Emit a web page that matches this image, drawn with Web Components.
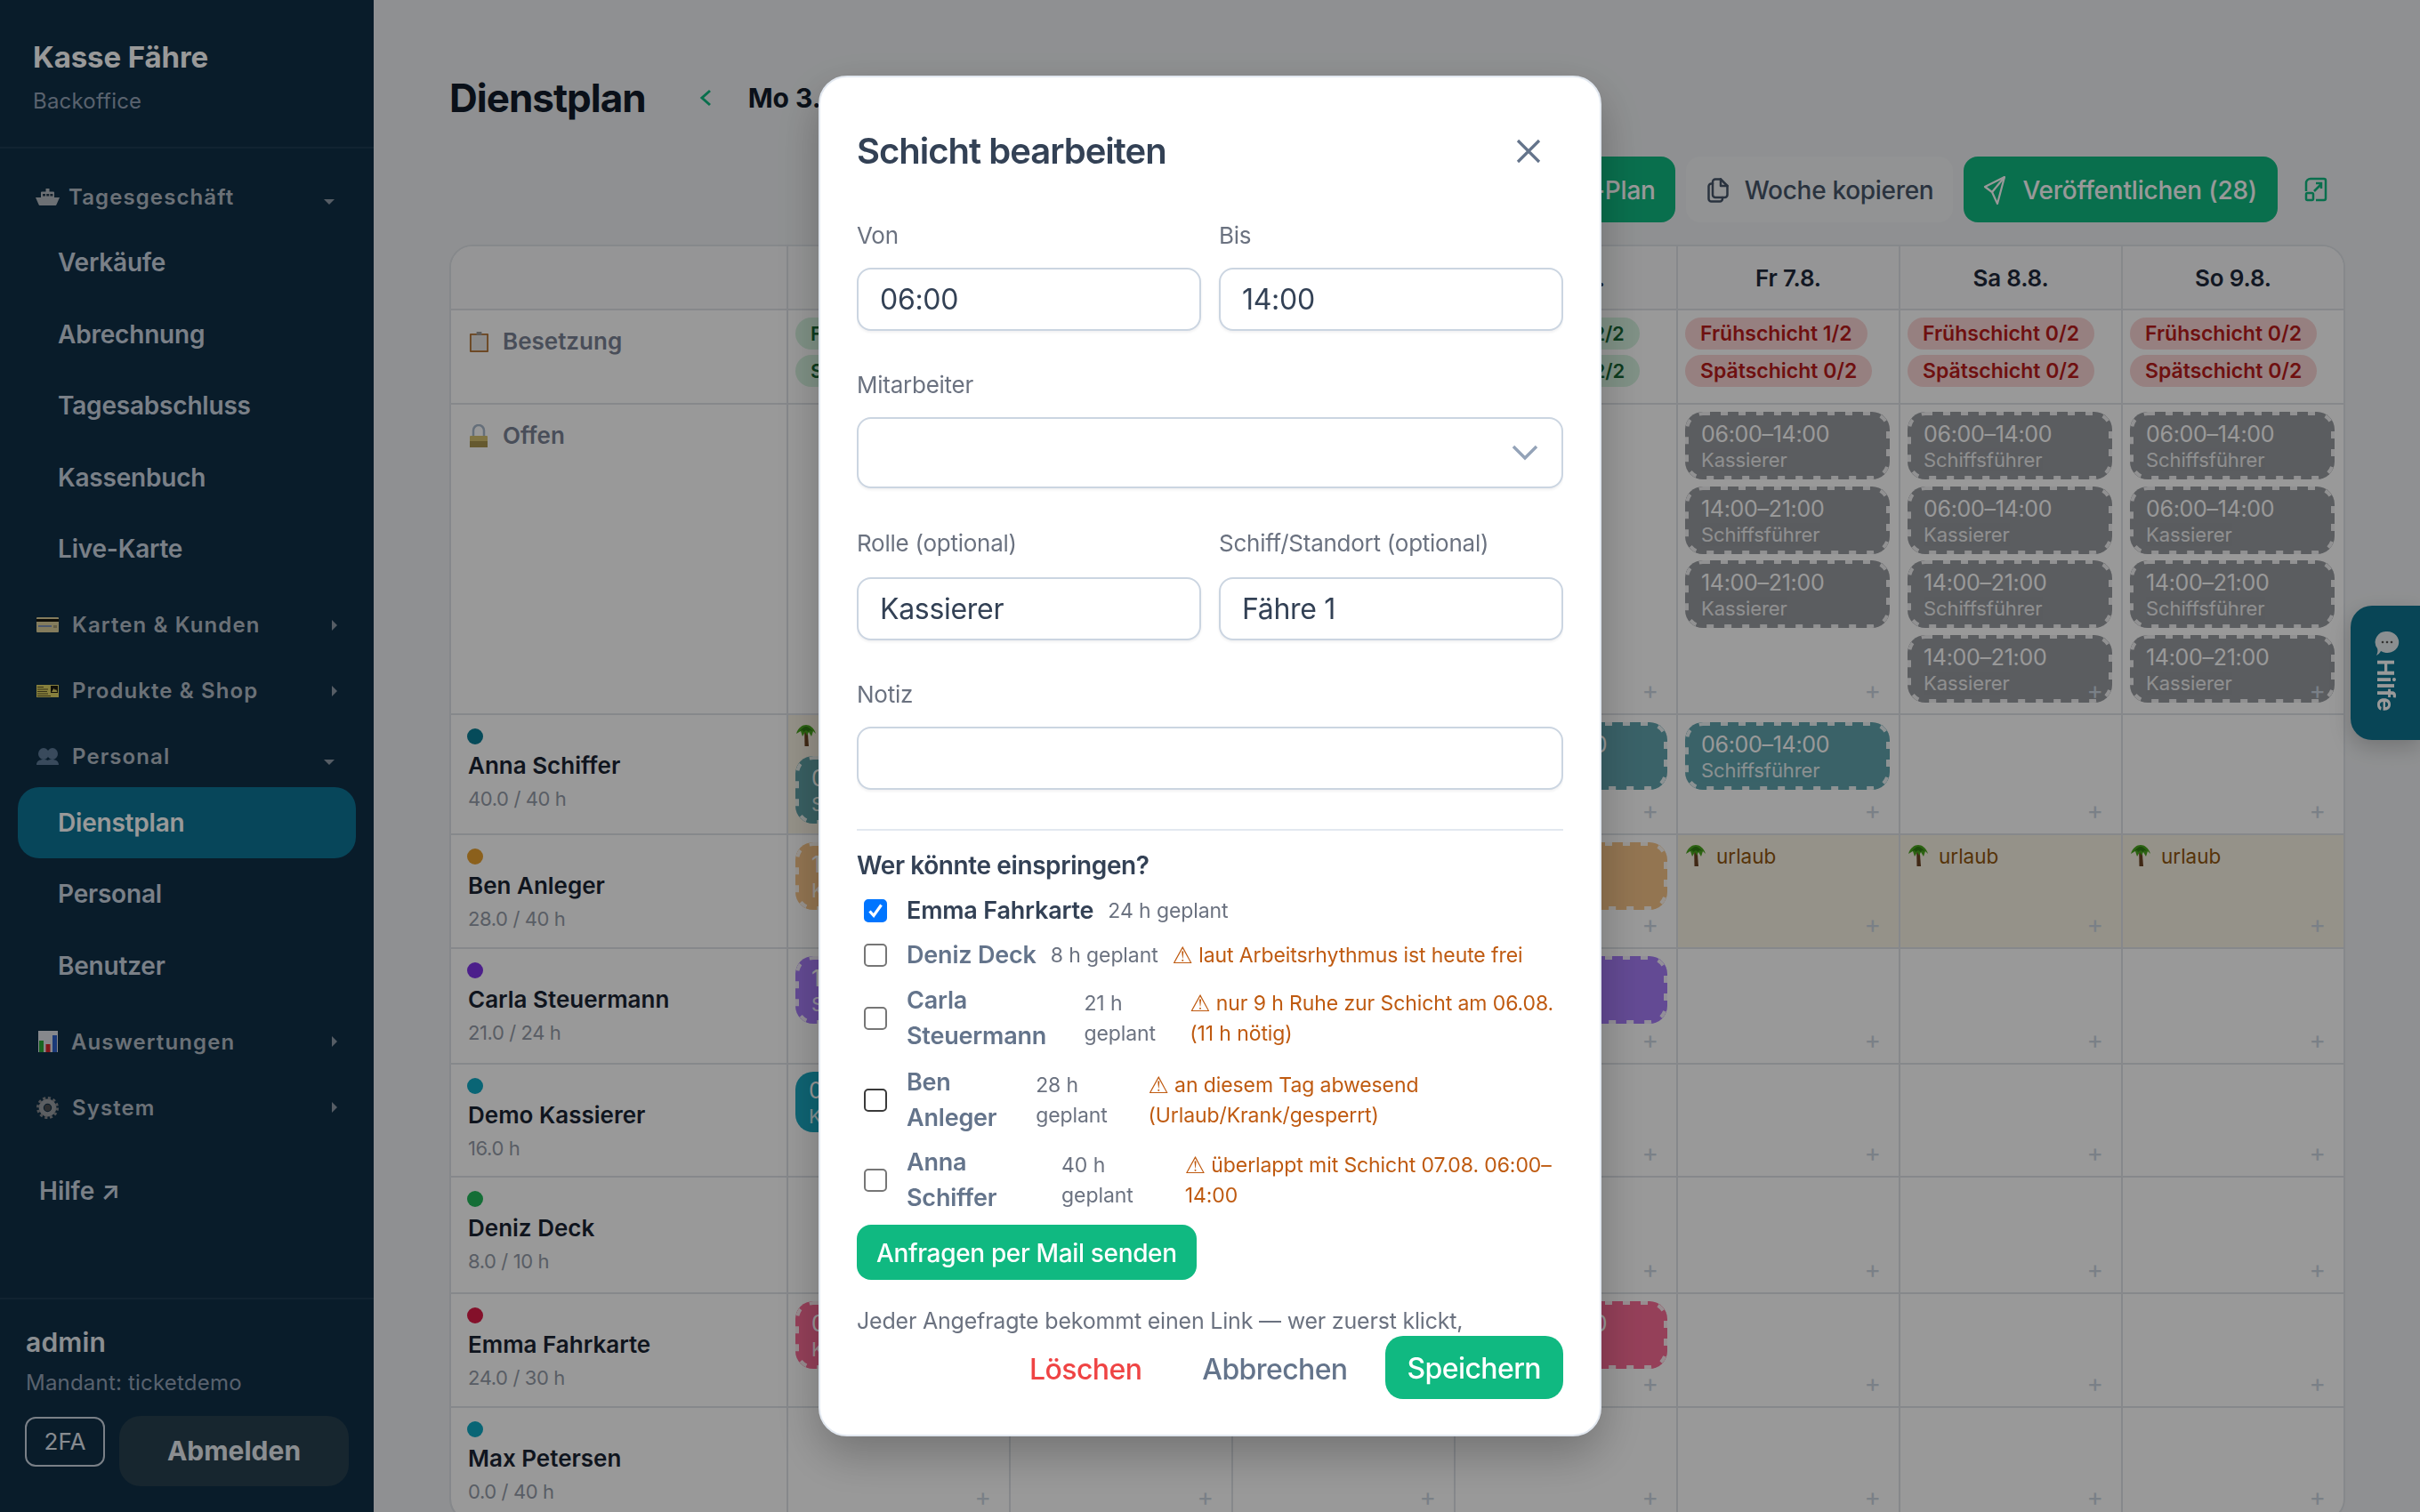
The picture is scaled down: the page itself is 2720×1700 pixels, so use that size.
<!DOCTYPE html>
<html lang="de"><head><meta charset="utf-8"><title>Dienstplan</title>
<style>
html,body{margin:0;padding:0;height:100%;overflow:hidden;background:#eff1f3;font-family:Inter,"Liberation Sans",sans-serif}
</style></head><body>
<x-app>
  <x-sidebar slot="side"></x-sidebar>
  <x-page>
    <x-topbar></x-topbar>
    <x-roster></x-roster>
  </x-page>
</x-app>
<x-helptab></x-helptab>
<x-dialog heading="Schicht bearbeiten">
  <x-row2>
    <x-field label="Von"><x-box>06:00</x-box></x-field>
    <x-field label="Bis"><x-box>14:00</x-box></x-field>
  </x-row2>
  <x-field label="Mitarbeiter"><x-box select></x-box></x-field>
  <x-row2 style="--mt:44px;--lg:20px">
    <x-field label="Rolle (optional)"><x-box>Kassierer</x-box></x-field>
    <x-field label="Schiff/Standort (optional)"><x-box>Fähre 1</x-box></x-field>
  </x-row2>
  <x-field label="Notiz"><x-box></x-box></x-field>
  <x-standby></x-standby>
</x-dialog>
<script>
const define=(name,css,render)=>customElements.define(name,class extends HTMLElement{
  connectedCallback(){ if(this.shadowRoot)return; const r=this.attachShadow({mode:'open'}); r.innerHTML=`<style>${css}</style>`+(typeof render==='function'?render(this):render); }
});
const EMOJI={
 ship:`<svg viewBox="0 0 27 19" width="27" height="19"><path fill="#b4bbc2" d="M11.500 0h4v4h-4zM6 4.500a1 1 0 0 1 1-1h13a1 1 0 0 1 1 1V10H6z"/><path fill="#b4bbc2" d="M0 10h27l-3.500 8a1.500 1.500 0 0 1-1.500 1H5a1.500 1.500 0 0 1-1.500-1z"/><path fill="#24394b" d="M8 6h3v2.500H8zM12.200 6h3v2.500h-3zM16.400 6h3v2.500h-3z"/></svg>`,
 card:`<svg viewBox="0 0 25 17" width="25" height="17"><rect width="25" height="17" rx="1" fill="#dccf9c"/><rect y="2" width="25" height="3" fill="#17140c"/><rect x="2" y="9" width="15" height="2" fill="#7f93b8"/><rect x="19" y="9" width="4" height="3" fill="#a89f78"/></svg>`,
 ticket:`<svg viewBox="0 0 25 14" width="25" height="14"><rect width="25" height="14" fill="#e2d566"/><path d="M1 2h7v1H1zM1 4.500h12v1H1zM1 7h11v1H1zM1 9.500h12v1H1zM1 12h15v1H1z" fill="#5c5628"/><rect x="16" y="1" width="8" height="8" fill="#1d1b10"/><path fill="#e2d566" d="M17 8l2.500-4 1.500 2 1-1 1.500 3z"/></svg>`,
 people:`<svg viewBox="0 0 25 19" width="25" height="19"><g fill="#5f7c9a"><ellipse cx="8" cy="6.500" rx="6" ry="6.500"/><ellipse cx="18" cy="6.500" rx="6" ry="6.500"/><path d="M0 19c0-4 3-6 8-6 2 0 3.500.3 4.500 1 1-.7 2.500-1 5-1 4.500 0 7.500 2 7.500 6z"/></g></svg>`,
 chart:`<svg viewBox="0 0 22 24" width="22" height="24"><rect width="22" height="24" fill="#dfe3ea"/><rect x="1" y="11" width="5" height="13" fill="#2aa838"/><rect x="8.500" y="15" width="5" height="9" fill="#d8262c"/><rect x="16" y="5" width="5" height="19" fill="#2c60c8"/></svg>`,
 gear:`<svg viewBox="0 0 24 24" width="25" height="25"><circle cx="12" cy="12" r="7" fill="none" stroke="#9a9ea3" stroke-width="5"/><circle cx="12" cy="12" r="10.500" fill="none" stroke="#84888d" stroke-width="3" stroke-dasharray="3 2.500"/><circle cx="12" cy="12" r="3.500" fill="#4a4d50"/></svg>`,
 clip:`<svg viewBox="0 0 24 26" width="23" height="25"><rect x="1" y="3" width="22" height="22" rx="1" fill="#b5773a"/><rect x="3" y="5" width="18" height="18" fill="#e8e8e8"/><rect x="9" y="1" width="6" height="4" fill="#9a9a9a"/></svg>`,
 lock:`<svg viewBox="0 0 20 26" width="20" height="26"><path d="M4 13V7a6 6 0 0 1 12 0v6" fill="none" stroke="#a9b9cc" stroke-width="2.500"/><rect y="13" width="20" height="13" rx="1" fill="#d6c171"/><rect y="19" width="20" height="7" fill="#a8954f"/></svg>`,
 palm:`<svg viewBox="0 0 22 24" width="22" height="24"><path d="M9.200 8h3.600l1.200 16H9.500z" fill="#6b4423"/><path d="M0 10C2 3 7 0 11 0s9 3 11 10l-3-3-2 6-3-5-2 4-2-4-3 5-2-6z" fill="#4aa51f"/><path d="M4 7c2-3 5-5 7-5s5 2 7 5l-3-1-1 2-3-2-3 2-1-2z" fill="#2f7d12"/></svg>`
};
define('x-emoji',':host{display:inline-flex;flex:none;align-items:center;justify-content:center}svg{display:block}',h=>EMOJI[h.getAttribute('name')]);

define('x-app',':host{display:flex;width:2720px;height:1700px;overflow:hidden}','<slot name="side"></slot><slot></slot>');

/* ---------- sidebar ---------- */
define('x-navgroup',`
:host{display:flex;align-items:center;height:70px;margin-bottom:4px;padding:0 42px 0 40px;color:#b3bcc6;font-size:24px;font-weight:600;letter-spacing:1.1px}
.i{width:27px;margin-right:var(--g,14px);display:flex;justify-content:center}
.t{flex:1;white-space:nowrap}
svg{display:block}`,h=>{
 const open=h.hasAttribute('open');
 return `<span class="i"><x-emoji name="${h.getAttribute('icon')}"></x-emoji></span><span class="t"><slot></slot></span>`+
 (open?`<svg width="12" height="6" viewBox="0 0 12 6" style="margin-top:12px;margin-right:2px"><path d="M0 0h12L6 6z" fill="#8f9ba8"/></svg>`
      :`<svg width="6" height="12" viewBox="0 0 6 12" style="margin-right:-1px"><path d="M0 0l6 6-6 6z" fill="#8f9ba8"/></svg>`);
});
define('x-navitem',`
:host{display:flex;align-items:center;height:80px;margin:0 20px .5px;padding-left:45px;border-radius:24px;color:#cbd5e1;font-size:28px;font-weight:600;letter-spacing:-.2px}
:host([active]){background:#0d7596;color:#fff}`,()=>'<slot></slot>');
define('x-sidebar',`
:host{display:flex;flex-direction:column;width:420px;flex:none;height:1700px;background:#0f2f47;color:#fff;box-sizing:border-box}
.brand{height:167px;box-sizing:border-box;border-bottom:2px solid #1d3b52;padding:42px 37px 0}
.brand b{display:block;font-size:33px;line-height:44px;font-weight:700;color:#fff;letter-spacing:-.1px}
.brand span{display:block;font-size:24px;line-height:32px;margin-top:12px;color:#94a3b8;letter-spacing:.2px}
nav{padding-top:19px;flex:1}
.items{margin-top:-5px}
.gap{height:10px}
.hilfe{display:flex;align-items:center;height:70px;margin-top:24px;padding-left:44px;font-size:28px;font-weight:600;color:#cbd5e1}
.foot{height:241px;box-sizing:border-box;border-top:2px solid #1d3b52;padding:29px 28px 0 29px}
.foot b{display:block;font-size:30px;line-height:38px;font-weight:600;color:#e8edf2;letter-spacing:.2px}
.foot .m{font-size:24px;line-height:36px;margin-top:9px;color:#94a3b8;letter-spacing:.2px}
.btns{display:flex;align-items:flex-start;gap:16px;margin-top:19px}
.fa{width:90px;height:56px;box-sizing:border-box;border:2px solid #cbd5e1;border-radius:12px;font-size:26px;line-height:52px;text-align:center;color:#e2e8f0;margin-top:1px;margin-left:-1px}
.out{width:258px;height:79px;border-radius:24px;background:#27404f;font-size:30px;font-weight:700;line-height:79px;text-align:center;color:#e8edf2}
`,()=>`
<div class="brand"><b>Kasse Fähre</b><span>Backoffice</span></div>
<nav>
<x-navgroup icon="ship" open style="--g:10px">Tagesgeschäft</x-navgroup>
<div class="items"><x-navitem>Verkäufe</x-navitem><x-navitem>Abrechnung</x-navitem><x-navitem>Tagesabschluss</x-navitem><x-navitem>Kassenbuch</x-navitem><x-navitem>Live-Karte</x-navitem></div>
<div class="gap"></div>
<x-navgroup icon="card">Karten &amp; Kunden</x-navgroup>
<x-navgroup icon="ticket">Produkte &amp; Shop</x-navgroup>
<x-navgroup icon="people" open>Personal</x-navgroup>
<div class="items"><x-navitem active>Dienstplan</x-navitem><x-navitem>Personal</x-navitem><x-navitem>Benutzer</x-navitem></div>
<div class="gap"></div>
<x-navgroup icon="chart" style="--g:13px">Auswertungen</x-navgroup>
<x-navgroup icon="gear">System</x-navgroup>
<div class="hilfe">Hilfe ↗</div>
</nav>
<div class="foot"><b>admin</b><div class="m">Mandant: ticketdemo</div>
<div class="btns"><div class="fa">2FA</div><div class="out">Abmelden</div></div></div>`);

/* ---------- page ---------- */
define('x-page',':host{display:block;flex:1;min-width:0;height:1700px;box-sizing:border-box;padding:80px 86px 0 85px;background:#eff1f3;overflow:hidden}','<slot></slot>');
define('x-btn',`
:host{display:inline-flex;align-items:center;gap:18px;height:74px;box-sizing:border-box;padding:2px 22px 0 24px;border-radius:16px;font-size:28px;font-weight:500;white-space:nowrap;background:#f3f5f7;color:#475569;letter-spacing:-.3px}
:host([primary]){background:#10b981;color:#fff;padding:2px 22px 0 22px;letter-spacing:-.2px}
::slotted(svg){display:block}`,()=>'<slot></slot>');
define('x-topbar',`
:host{display:block}
.r1{display:flex;align-items:center;height:60px}
h1{margin:0;font-size:44px;font-weight:700;color:#111c2a;line-height:60px;letter-spacing:-1px}
.nav{margin-left:60px;display:flex;align-items:center;gap:41px;font-size:30px;font-weight:700;color:#111c2a;white-space:nowrap}
.r2{display:flex;justify-content:flex-end;align-items:center;gap:12px;margin-top:36px;height:74px}
.ext{display:flex;align-items:center;justify-content:center;width:62px}
svg{display:block}
`,()=>`
<div class="r1"><h1>Dienstplan</h1><div class="nav"><svg width="14" height="20" viewBox="0 0 14 20"><path d="M12 2 3 10l9 8" fill="none" stroke="#10b981" stroke-width="3"/></svg><span>Mo 3.8. – So 9.8.</span></div></div>
<div class="r2">
<x-btn primary>Auto-Plan</x-btn>
<x-btn><svg width="24" height="28" viewBox="0 0 24 28" fill="none" stroke="#475569" stroke-width="2.500" stroke-linejoin="round" stroke-linecap="round"><path d="M9 1.500h6l7.500 7.500v10a3 3 0 0 1-3 3H9a3 3 0 0 1-3-3V4.500a3 3 0 0 1 3-3z"/><path d="M15 1.500V9h7.500"/><path d="M6 6.500H4.500a3 3 0 0 0-3 3v14a3 3 0 0 0 3 3H14a3 3 0 0 0 3-3V22"/></svg><span>Woche kopieren</span></x-btn>
<x-btn primary style="padding-right:23px"><svg width="26" height="34" viewBox="0 0 26 34" fill="none" stroke="#fff" stroke-width="2.200" stroke-linejoin="round"><path d="M24 2 2 13l8 6 6 13z"/><path d="M24 2 10 19"/></svg><span>Veröffentlichen (28)</span></x-btn>
<div class="ext"><svg width="26" height="28" viewBox="0 0 26 28" fill="none" stroke="#10b981" stroke-width="2.500"><path d="M7 2h15a2 2 0 0 1 2 2v20a2 2 0 0 1-2 2H13"/><path d="M7 2a5 5 0 0 0-5 5v9"/><rect x="2" y="18" width="8" height="8" rx="1.500"/><path d="M11 16 19 8M13 7h6v6"/></svg></div>
</div>`);

define('x-shift',`
:host{display:block;flex:none;position:relative;box-sizing:border-box;height:76px;border-radius:20px;background:var(--c,#62666e);opacity:.65;padding:8px 18px;color:#fff;overflow:hidden;white-space:nowrap}
:host([solid]){height:68px;opacity:1;padding:4px 15px 0}
svg{position:absolute;inset:0;width:100%;height:100%}
rect{width:calc(100% - 4px);height:calc(100% - 4px);fill:none;stroke:rgba(255,255,255,.88);stroke-width:4px;stroke-dasharray:8 12}
.t{font-size:25px;line-height:34px;font-weight:400;letter-spacing:-.3px}
.r{font-size:22px;line-height:24px;opacity:.85;letter-spacing:-.1px}`,h=>`${h.hasAttribute('solid')?'':'<svg aria-hidden="true"><rect x="2" y="2" rx="18" ry="18"></rect></svg>'}<div class="t">${h.getAttribute('time')}</div><div class="r">${h.getAttribute('role')}</div>`);
define('x-pill',`
:host{display:block;width:max-content;height:36px;box-sizing:border-box;padding:0 17px;border-radius:18px;font-size:22px;line-height:36px;font-weight:600;letter-spacing:-.2px;white-space:nowrap;background:#d5f2df;color:#166534}
:host([bad]){background:#fbd6d6;color:#b91c1c;font-size:23px;letter-spacing:0}`,()=>'<slot></slot>');
define('x-absence',`
:host{display:flex;align-items:center;gap:12px;height:30px;flex:none;font-size:22.500px;color:#8f560e;white-space:nowrap}
x-emoji{margin-left:1px}`,()=>`<x-emoji name="palm"></x-emoji><span><slot></slot></span>`);
define('x-cell',`
:host{display:flex;flex-direction:column;gap:7.500px;position:relative;box-sizing:border-box;border-left:2px solid #dfe3e8;border-top:2px solid #dfe3e8;padding:8px 10px 0 8px;min-width:0;overflow:hidden}
:host([off]){background:#f9f3e4}
.plus{position:absolute;right:20px;bottom:12px;font-size:28px;line-height:28px;color:#cbd5e1}`,h=>`<slot></slot>${h.hasAttribute('noadd')?'':'<span class="plus">+</span>'}`);
define('x-person',`
:host{display:block;box-sizing:border-box;border-top:2px solid #dfe3e8;padding:15px 10px 0 18px;overflow:hidden;white-space:nowrap}
.d{display:block;width:18px;height:18px;border-radius:50%;background:var(--dot)}
.n{font-size:26px;line-height:36px;font-weight:600;color:#1a2433;margin-top:6px;padding-left:1px}
.s{font-size:22px;line-height:34px;color:#949ca8;margin-top:2px;padding-left:1px;letter-spacing:-.4px}`,h=>`<span class="d"></span><div class="n">${h.getAttribute('name')}</div><div class="s">${h.getAttribute('sub')}</div>`);
define('x-sectionhead',`
:host{display:flex;gap:15px;box-sizing:border-box;border-top:2px solid #dfe3e8;padding:16px 20px 0 19px;align-items:flex-start;font-size:26px;line-height:38px;font-weight:600;color:#7a8294;white-space:nowrap}
.w{width:24px;height:38px;display:flex;align-items:center;justify-content:center}`,h=>`<span class="w"><x-emoji name="${h.getAttribute('icon')}"></x-emoji></span><span><slot></slot></span>`);

const DOT={anna:'#0a7d96',ben:'#e8a030',carla:'#7f35e8',demo:'#0fa8c4',deniz:'#22b85a',emma:'#dc1c46',max:'#0fa8c4'};
const C={anna:'#0d7383',ben:'#f0a44a',carla:'#7837f3',emma:'#f51d5e'};
const sh=(t,r,c,solid)=>`<x-shift time="${t}" role="${r}"${c?` style="--c:${c}"`:''}${solid?' solid':''}></x-shift>`;
const F='06:00–14:00',L='14:00–21:00',K='Kassierer',S='Schiffsführer';
const pills=(a,b,bad)=>`<x-pill${bad?' bad':''}>Frühschicht ${a}/2</x-pill><x-pill${bad?' bad':''} style="margin-top:-1.500px">Spätschicht ${b}/2</x-pill>`;
const U='<x-absence>urlaub</x-absence>';
const ROWS=[
 ['Anna Schiffer','40.0 / 40 h',DOT.anna,{0:[1,U+sh(F,S,C.anna)],3:[0,sh(F,S,C.anna)],4:[0,sh(F,S,C.anna)]}],
 ['Ben Anleger','28.0 / 40 h',DOT.ben,{0:[0,sh(L,K,C.ben)],3:[0,sh(L,K,C.ben)],4:[1,U],5:[1,U],6:[1,U]}],
 ['Carla Steuermann','21.0 / 24 h',DOT.carla,{0:[0,sh(L,S,C.carla)],3:[0,sh(L,S,C.carla)]}],
 ['Demo Kassierer','16.0 h',DOT.demo,{0:[0,sh(F,K,'#19a7c0',1)]}],
 ['Deniz Deck','8.0 / 10 h',DOT.deniz,{}],
 ['Emma Fahrkarte','24.0 / 30 h',DOT.emma,{0:[0,sh(F,K,C.emma)],3:[0,sh(F,K,C.emma)]}],
 ['Max Petersen','0.0 / 40 h',DOT.max,{}]
];
define('x-roster',`
:host{display:grid;grid-template-columns:377px repeat(7,250px);grid-template-rows:70px 106px 349px 135px 128px 130px 127px 131px 128px 128px;margin-top:25px;border:2px solid #dfe3e8;border-radius:26px;background:#fff;overflow:hidden;width:max-content;box-sizing:border-box}
.h{background:#f8f9fa;border-left:2px solid #dfe3e8;display:flex;align-items:center;justify-content:center;font-size:26px;font-weight:600;color:#1e293b;white-space:nowrap;overflow:hidden;letter-spacing:-.2px}
.h.f{border-left:0}
`,()=>{
 let o='<div class="h f"></div>';
 ['','','','Do 6.8.','Fr 7.8.','Sa 8.8.','So 9.8.'].forEach(d=>o+=`<div class="h">${d}</div>`);
 o+='<x-sectionhead icon="clip">Besetzung</x-sectionhead>';
 const P=[[2,2,0],null,null,[2,2,0],[1,0,1],[0,0,1],[0,0,1]];
 P.forEach(p=>o+=`<x-cell noadd>${p?pills(p[0],p[1],p[2]):''}</x-cell>`);
 o+='<x-sectionhead icon="lock">Offen</x-sectionhead>';
 const O={4:[[F,K],[L,S],[L,K]],5:[[F,S],[F,K],[L,S],[L,K]],6:[[F,S],[F,K],[L,S],[L,K]]};
 for(let i=0;i<7;i++)o+=`<x-cell>${(O[i]||[]).map(a=>sh(a[0],a[1])).join('')}</x-cell>`;
 ROWS.forEach(r=>{
  o+=`<x-person name="${r[0]}" sub="${r[1]}" style="--dot:${r[2]}"></x-person>`;
  for(let i=0;i<7;i++){const c=r[3][i];o+=`<x-cell${c&&c[0]?' off':''}>${c?c[1]:''}</x-cell>`;}
 });
 return o;
});

define('x-helptab',`
:host{position:fixed;right:0;top:681px;width:78px;height:151px;box-sizing:border-box;background:#0e7490;border-radius:24px 0 0 24px;color:#fff;display:flex;flex-direction:column;align-items:center;padding-top:28px;box-shadow:0 8px 24px rgba(0,0,0,.2)}
span{writing-mode:vertical-rl;font-size:26px;font-weight:700;line-height:30px;margin-top:2px}
svg{display:block;margin-left:4px}`,()=>`<svg width="28" height="30" viewBox="0 0 28 30"><path d="M14 1a13 12 0 1 1-7 22c-1 2-3 4-5 5 1-2 2-5 1-8A12 12 0 0 1 14 1z" fill="#e8eef2"/><circle cx="9" cy="13" r="1.300" fill="#555"/><circle cx="14" cy="13" r="1.300" fill="#555"/><circle cx="19" cy="13" r="1.300" fill="#555"/></svg><span>Hilfe</span>`);

/* ---------- dialog ---------- */
define('x-row2',':host{display:grid;grid-template-columns:387px 387px;column-gap:20px}','<slot></slot>');
define('x-field',`
:host{display:block;margin-top:var(--mt,43px)}
label{display:block;font-size:26px;line-height:36px;color:#6b7280;margin-bottom:var(--lg,18px);letter-spacing:-.25px}`,h=>`<label>${h.getAttribute('label')}</label><slot></slot>`);
define('x-box',`
:host{display:flex;align-items:center;height:71px;box-sizing:border-box;border:2px solid #cbd5e1;border-radius:16px;background:#fff;padding:0 24px;font-size:32px;color:#334155;box-shadow:0 2px 3px rgba(15,23,42,.06);letter-spacing:-.3px}
:host([select]){height:80px;justify-content:flex-end;padding-right:26px}
svg{display:block}`,h=>h.hasAttribute('select')?`<svg width="30" height="18" viewBox="0 0 30 18"><path d="M2 2l13 13L28 2" fill="none" stroke="#94a3b8" stroke-width="3.500"/></svg>`:'<slot></slot>');
define('x-standby-row',`
:host{display:flex;align-items:center;gap:16px;margin-top:10.500px;font-size:23px;line-height:34px;color:#6b7280;letter-spacing:-.1px}
.cb{flex:none;box-sizing:border-box;width:26px;height:26px;margin:6px 6px 6px 8px;border:2px solid var(--cb,#767676);border-radius:5px;background:#fff;display:block}
:host([first]) .cb{background:#0075ff;border-color:#0075ff}
.cb svg{display:block;width:22px;height:22px}
.n{font-size:27px;line-height:40px;font-weight:600;color:#64748b;letter-spacing:-.2px}
:host([first]) .n{color:#334155}
.w{color:#bf5a10}
.w i{font-style:normal;font-family:"DejaVu Sans",sans-serif;font-size:26px;line-height:1;vertical-align:-1px}`,h=>`<span class="cb" role="checkbox" aria-checked="${h.hasAttribute('first')}">${h.hasAttribute('first')?'<svg viewBox="0 0 22 22"><path d="M4.500 11.500 9 16.500 17.500 4.500" fill="none" stroke="#fff" stroke-width="3.200"/></svg>':''}</span><span class="n">${h.getAttribute('name')}</span><span class="m">${h.getAttribute('meta')}</span>${h.getAttribute('warn')?`<span class="w"><i>⚠</i> ${h.getAttribute('warn')}</span>`:''}`);
define('x-standby',`
:host{display:block;margin-top:44px;border-top:2px solid #e2e8f0;padding-top:19px}
h3{margin:0;font-size:28px;line-height:40px;font-weight:600;color:#334155;letter-spacing:-.4px}
.list{margin-top:.500px}
.send{display:inline-block;margin-top:10px;height:62px;line-height:64px;padding:0 22px;border-radius:16px;background:#10b981;color:#fff;font-size:28px;font-weight:500;letter-spacing:-.35px}
p{margin:28px 0 0;font-size:25px;line-height:36px;color:#6b7280;letter-spacing:-.2px}
`,()=>`<h3>Wer könnte einspringen?</h3><div class="list">
<x-standby-row first name="Emma Fahrkarte" meta="24 h geplant"></x-standby-row>
<x-standby-row name="Deniz Deck" meta="8 h geplant" warn="laut Arbeitsrhythmus ist heute frei"></x-standby-row>
<x-standby-row name="Carla Steuermann" meta="21 h geplant" warn="nur 9 h Ruhe zur Schicht am 06.08. (11 h nötig)"></x-standby-row>
<x-standby-row name="Ben Anleger" meta="28 h geplant" warn="an diesem Tag abwesend (Urlaub/Krank/gesperrt)" style="--cb:#3a3a3a;margin-top:12px"></x-standby-row>
<x-standby-row name="Anna Schiffer" meta="40 h geplant" warn="überlappt mit Schicht 07.08. 06:00–14:00"></x-standby-row>
</div><div class="send">Anfragen per Mail senden</div>
<p>Jeder Angefragte bekommt einen Link — wer zuerst klickt, übernimmt die Schicht.</p>`);
define('x-dialog',`
:host{position:fixed;inset:0;z-index:10;display:flex;align-items:center;justify-content:center;background:rgba(0,0,0,.4);backdrop-filter:blur(.7px)}
.m{width:880px;height:1530px;box-sizing:border-box;border:2px solid #e2e8f0;border-radius:32px;background:#fff;padding:41px 41px 40px;display:flex;flex-direction:column;box-shadow:0 20px 50px rgba(0,0,0,.25)}
.b{flex:1;min-height:0;overflow:hidden}
header{display:flex;align-items:center;justify-content:space-between;height:84px;margin-bottom:-8px}
h2{margin:0;font-size:40px;font-weight:600;color:#334155;line-height:60px;letter-spacing:-1px}
footer{display:flex;justify-content:flex-end;align-items:center;height:71px;flex:none;font-size:32px;font-weight:500;letter-spacing:-.6px}
.del{color:#ef4444;margin:3px 68px 0 0}
.can{color:#64748b;margin:3px 42px 0 0}
.ok{background:#10b981;color:#fff;height:71px;line-height:73px;padding:0 25px;border-radius:20px}
svg{display:block;margin-right:25px}
`,h=>`<div class="m"><div class="b"><header><h2>${h.getAttribute('heading')}</h2><svg width="28" height="28" viewBox="0 0 28 28"><path d="M2 2l24 24M26 2 2 26" stroke="#64748b" stroke-width="3.200" fill="none"/></svg></header><slot></slot></div>
<footer><span class="del">Löschen</span><span class="can">Abbrechen</span><span class="ok">Speichern</span></footer></div>`);
</script>
</body></html>
